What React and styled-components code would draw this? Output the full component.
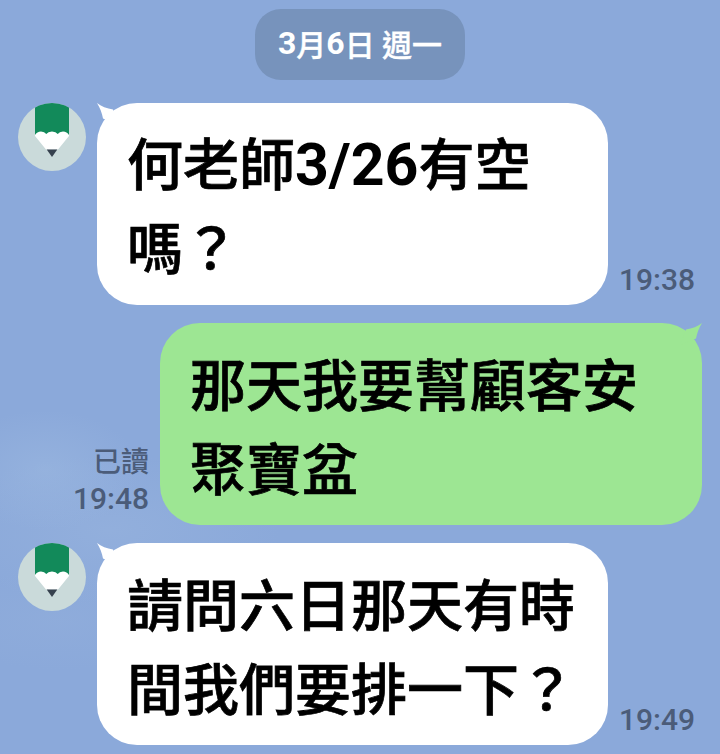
import React from "react";
import styled, { createGlobalStyle } from "styled-components";

const Global = createGlobalStyle`
  html, body { margin: 0; padding: 0; }
  body { width: 720px; height: 754px; overflow: hidden; background: #8ba9da; }
`;

const FONT = `Roboto, "Noto Sans CJK TC", sans-serif`;

const Screen = styled.div`
  position: relative;
  width: 720px;
  height: 754px;
  overflow: hidden;
  box-sizing: border-box;
  padding-top: 9px;
  display: flex;
  flex-direction: column;
  align-items: stretch;
  font-family: ${FONT};
  background:
    radial-gradient(ellipse 95px 60px at 45px 470px, rgba(160, 188, 226, 0.45), rgba(160, 188, 226, 0) 100%),
    radial-gradient(ellipse 170px 75px at 110px 530px, rgba(152, 180, 222, 0.55), rgba(152, 180, 222, 0) 100%),
    radial-gradient(ellipse 130px 50px at 60px 620px, rgba(148, 176, 220, 0.4), rgba(148, 176, 220, 0) 100%),
    #8ba9da;
`;

const DatePill = styled.div`
  align-self: center;
  box-sizing: border-box;
  width: 210px;
  height: 71px;
  margin-bottom: 23px;
  padding-bottom: 4px;
  border-radius: 26px;
  background: #7793bc;
  color: #fff;
  font-size: 30px;
  font-weight: 500;
  -webkit-text-stroke: 0.4px #fff;
  display: flex;
  align-items: center;
  justify-content: center;
  white-space: pre;
`;

const DateDigit = styled.span`
  font-size: 32px;
  font-weight: 700;
  -webkit-text-stroke: 0;
`;

const Row = styled.div`
  display: flex;
  align-items: flex-end;
  justify-content: ${(p) => (p.$mine ? "flex-end" : "flex-start")};
  padding: ${(p) => (p.$mine ? "0 18px 0 0" : "0 0 0 18px")};
  margin-bottom: ${(p) => p.$gap}px;
`;

const AvatarSlot = styled.div`
  align-self: flex-start;
  flex: none;
  width: 68px;
  height: 68px;
  margin-right: 11px;
`;

const Bubble = styled.div`
  position: relative;
  box-sizing: border-box;
  flex: none;
  width: ${(p) => p.$width}px;
  height: ${(p) => p.$height}px;
  padding: ${(p) => p.$top}px ${(p) => (p.$mine ? 31 : 32)}px 0 30px;
  border-radius: 40px;
  background: ${(p) => (p.$mine ? "#9de693" : "#fff")};
  color: #000;
  font-size: 56px;
  font-weight: 500;
  -webkit-text-stroke: 0.7px #000;
  line-height: 84px;
`;

const Latin = styled.span`
  font-size: 59px;
  font-weight: 700;
  line-height: 86px;
  -webkit-text-stroke: 0;
`;

const Tail = styled.svg`
  position: absolute;
  top: 0;
  ${(p) => (p.$mine ? "right: 0;" : "left: 0;")}
  width: 24px;
  height: 24px;
  overflow: visible;
`;

const Meta = styled.div`
  flex: none;
  display: flex;
  flex-direction: column;
  align-items: ${(p) => (p.$mine ? "flex-end" : "flex-start")};
  margin: ${(p) => (p.$mine ? "0 11px 7px 0" : "0 0 6px 11px")};
  color: #4b5c79;
`;

const ReadMark = styled.span`
  font-size: 28px;
  font-weight: 500;
  line-height: 38px;
  margin-bottom: -2px;
`;

const Time = styled.span`
  font-size: 30px;
  font-weight: 500;
  line-height: 38px;
`;

const Avatar = () => (
  <svg width="68" height="68" viewBox="0 0 68 68">
    <defs>
      <clipPath id="avatarClip"><circle cx="34" cy="34" r="34" /></clipPath>
    </defs>
    <circle cx="34" cy="34" r="34" fill="#cadada" />
    <g clipPath="url(#avatarClip)">
      <rect x="17" y="0" width="34" height="32" fill="#128a5a" />
      <path d="M17 32 Q19 28.5 23 28.5 Q26.5 28.5 28.3 31 Q30 28.5 34 28.5 Q38 28.5 39.7 31 Q41.5 28.5 45 28.5 Q49 28.5 51 32 L51 33 L40 46.5 L28 46.5 L17 33 Z" fill="#fff" />
      <path d="M28.7 46.5 H39.3 L34 54 Z" fill="#36414e" />
    </g>
  </svg>
);

const TailLeft = () => (
  <Tail viewBox="0 0 24 24">
    <path d="M0 0 C4 3.5 10 5.5 16 6.5 L22 22 L6 15.5 C5 10 3 5 0 0 Z" fill="#fff" />
  </Tail>
);

const TailRight = () => (
  <Tail $mine viewBox="0 0 24 24">
    <path d="M24 0 C20 3.5 14 5.5 8 6.5 L2 22 L18 15.5 C19 10 21 5 24 0 Z" fill="#9de693" />
  </Tail>
);

const Incoming = ({ children, time, gap, top }) => (
  <Row $gap={gap}>
    <AvatarSlot><Avatar /></AvatarSlot>
    <Bubble $width={511} $height={202} $top={top}>
      <TailLeft />
      {children}
    </Bubble>
    <Meta><Time>{time}</Time></Meta>
  </Row>
);

export default function App() {
  return (
    <>
      <Global />
      <Screen>
        <DatePill><DateDigit>3</DateDigit>月<DateDigit>6</DateDigit>日 週一</DatePill>
        <Incoming time="19:38" gap={18} top={19}>何老師<Latin>3/26</Latin>有空嗎？</Incoming>
        <Row $mine $gap={18}>
          <Meta $mine>
            <ReadMark>已讀</ReadMark>
            <Time>19:48</Time>
          </Meta>
          <Bubble $mine $width={542} $height={202} $top={22}>
            <TailRight />
            那天我要幫顧客安聚寶盆
          </Bubble>
        </Row>
        <Incoming time="19:49" gap={0} top={22}>請問六日那天有時間我們要排一下？</Incoming>
      </Screen>
    </>
  );
}
